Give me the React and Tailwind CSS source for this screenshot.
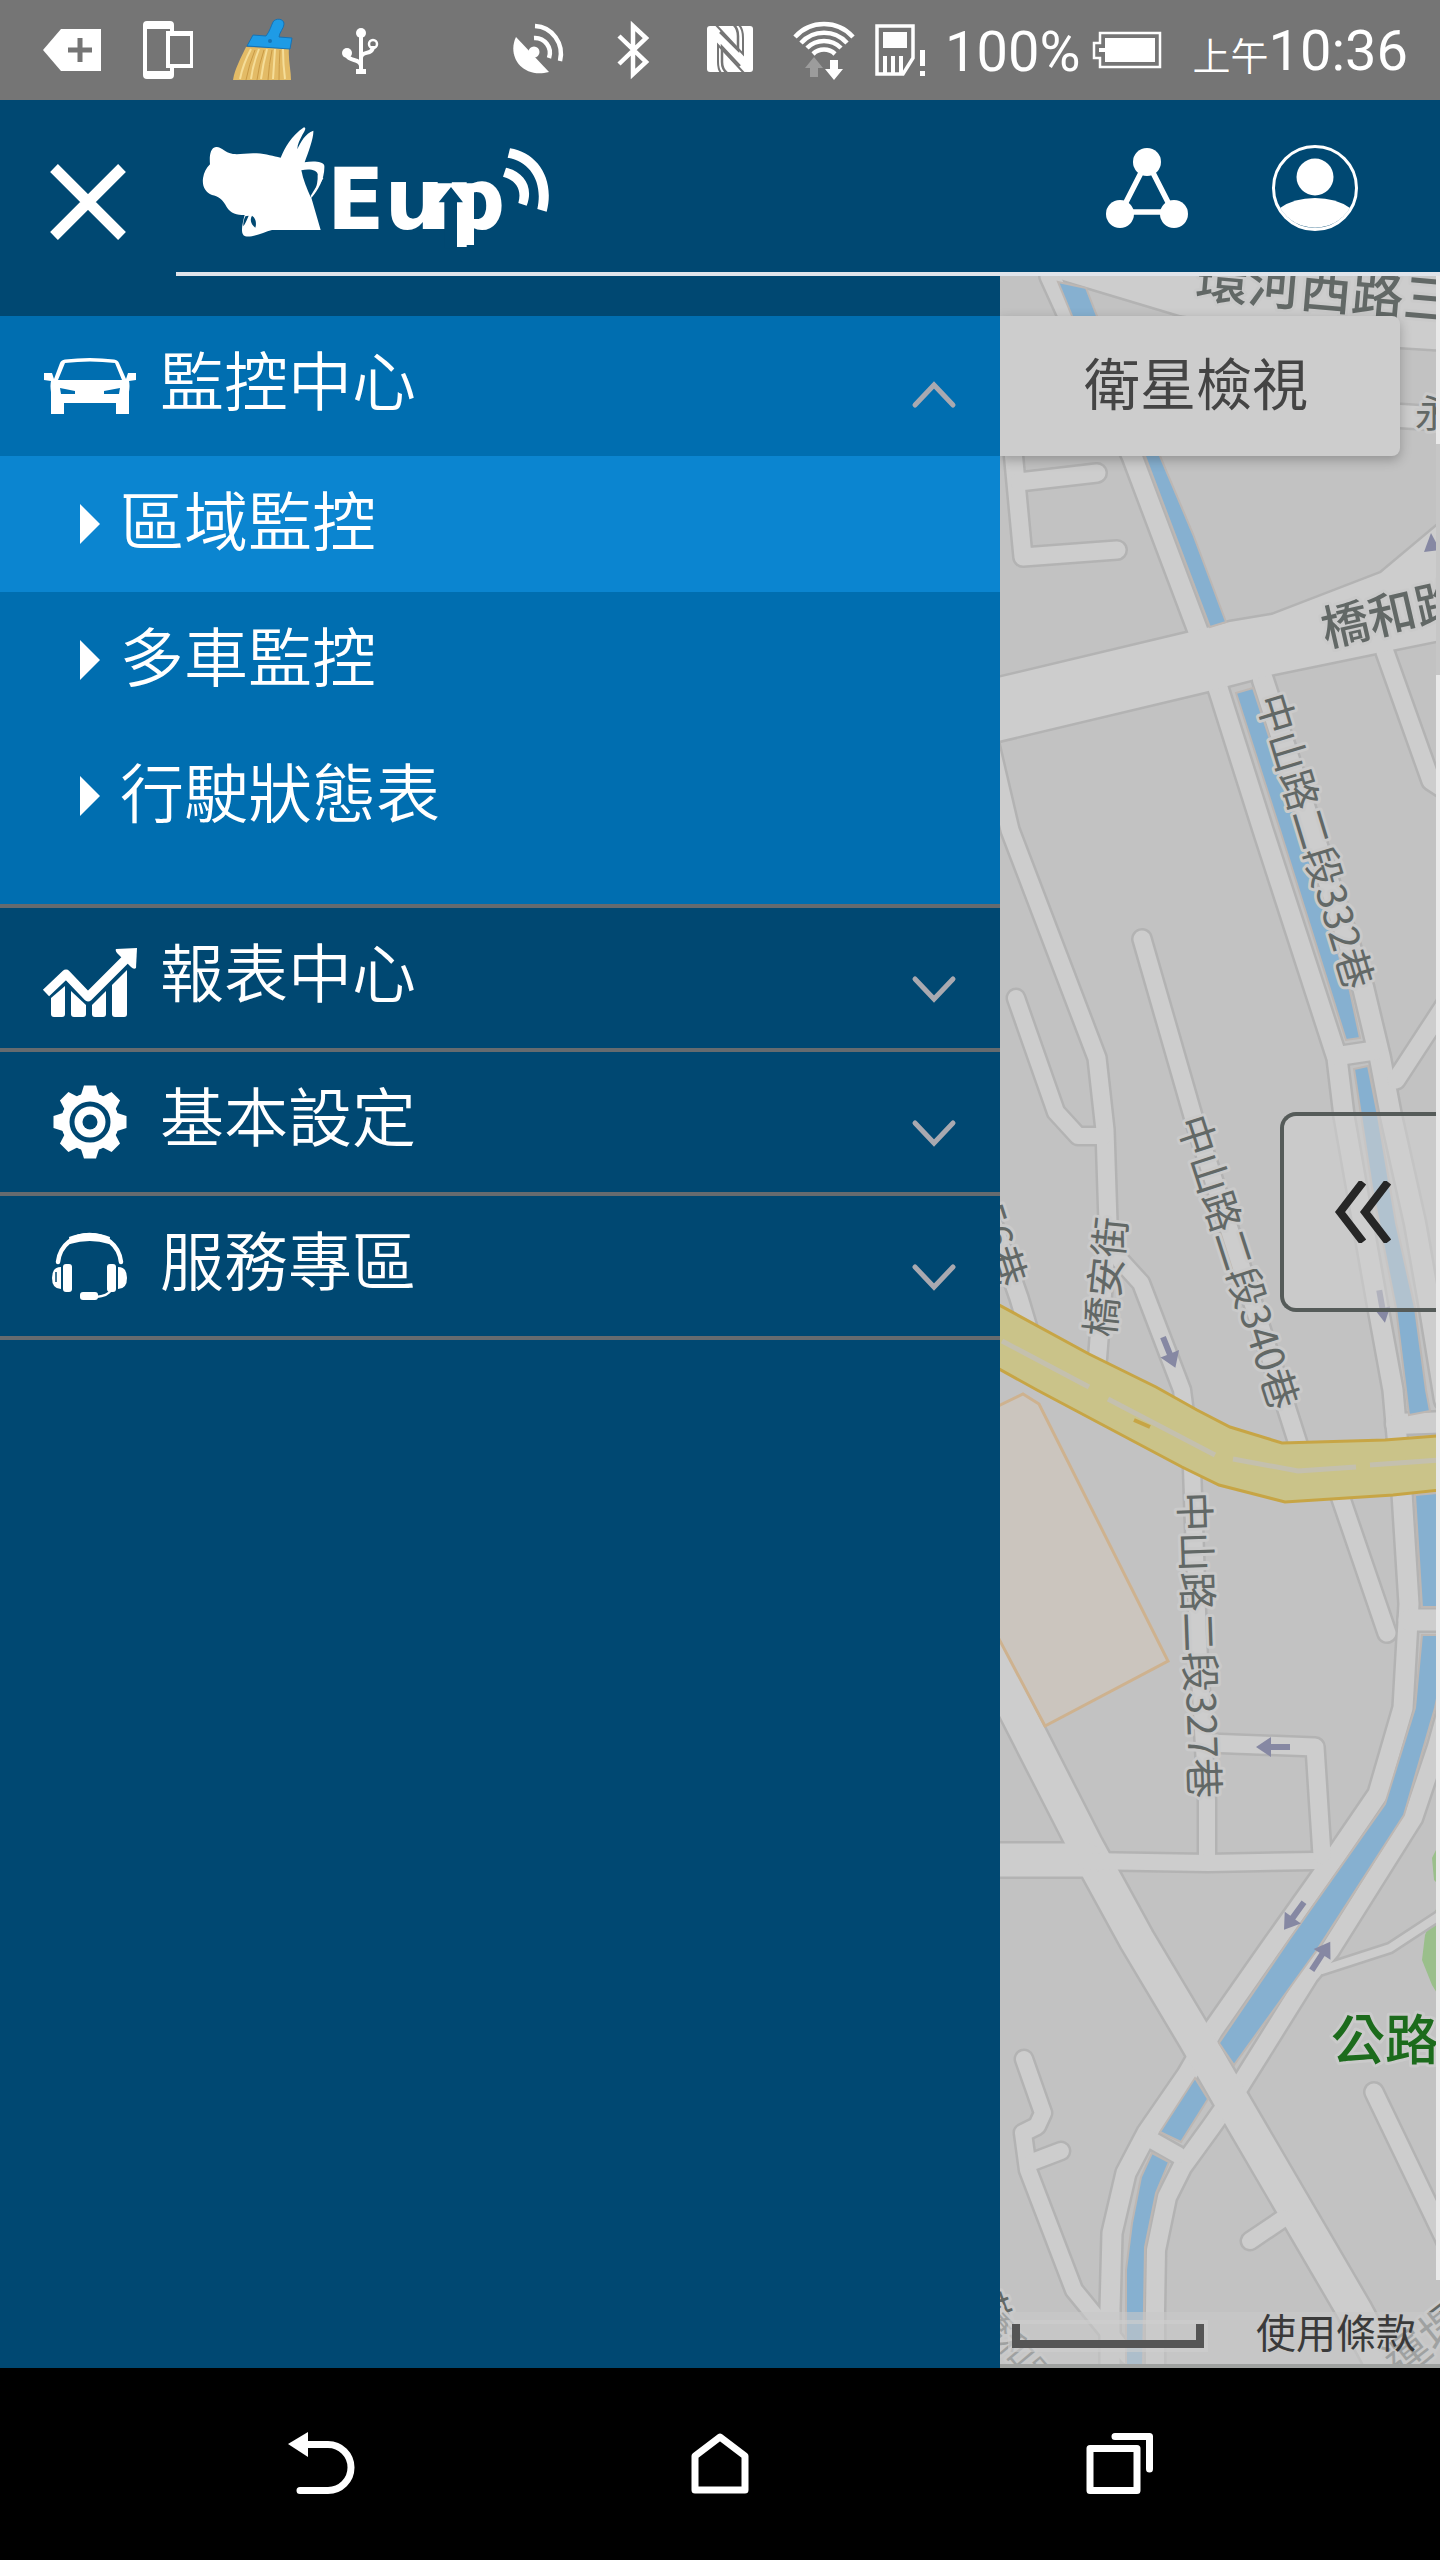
import React, { useState } from 'react';

const FONT = "font-['Noto_Sans_CJK_TC',sans-serif]";

/* ---------- status bar ---------- */

function StatusIcon({ x, w = 95, children }) {
    return (
        <svg viewBox={`${x} 0 ${w} 100`} height="100" width={w} className="shrink-0" aria-hidden="true">
            {children}
        </svg>
    );
}

function StatusBar() {
    return (
        <div className="flex h-[100px] items-center bg-[#757575] pl-7 pr-8 text-white">
            <StatusIcon x={28}>
                <path fill="#fff" d="M43 50 L61 29 H101 V71 H61 Z" />
                <path stroke="#757575" strokeWidth="5" d="M80 38 V62 M68 50 H92" />
            </StatusIcon>
            <StatusIcon x={123}>
                <path
                    fill="#fff"
                    fillRule="evenodd"
                    d="M147 21 H170 Q174 21 174 25 V31 H193 V68 H174 V75 Q174 79 170 79 H147 Q143 79 143 75 V25 Q143 21 147 21 Z M147 29 V71 H170 V68 H166 V31 H170 V29 Z M170 36 V64 H190 V36 Z"
                />
            </StatusIcon>
            <StatusIcon x={218}>
                <path fill="#e3bb66" d="M246 47 L289 48 C288 60 291 70 291 80 H233 C235 68 241 58 246 47 Z" />
                <path
                    stroke="#f5dd98"
                    strokeWidth="2"
                    fill="none"
                    d="M251 49 Q243 64 240 79 M259 49 Q253 64 251 79 M267 49 Q263 64 261 79 M275 49 Q274 64 273 79 M283 49 Q283 64 285 79"
                />
                <path
                    stroke="#c99a45"
                    strokeWidth="1"
                    fill="none"
                    d="M255 50 Q249 64 246 80 M264 50 Q259 64 257 80 M272 50 Q269 64 268 80 M280 50 Q279 64 279 80"
                />
                <path
                    fill="#1e9be6"
                    stroke="#1673b5"
                    strokeWidth="1"
                    d="M253 35 L266 36 C270 31 271 26 273 22 C275 18 284 18 284 24 C284 28 279 33 279 37 L292 38 L290 49 L247 46 Z"
                />
                <circle cx="270" cy="41" r="2" fill="#1673b5" />
            </StatusIcon>
            <StatusIcon x={313}>
                <g fill="none" stroke="#fff" strokeWidth="4">
                    <path d="M361 33 V72 M347 54 C347 62 361 58 361 66 M373 46 C373 56 361 50 361 58" />
                    <circle cx="373" cy="44" r="4" strokeWidth="2.5" />
                </g>
                <circle cx="361" cy="33" r="5" fill="#fff" />
                <circle cx="347" cy="53" r="5" fill="#fff" />
                <rect x="356" y="69" width="10" height="5" fill="#fff" />
            </StatusIcon>

            <div className="ml-auto flex items-center">
                <StatusIcon x={490}>
                    <path fill="#fff" d="M516 37 C507 55 521 79 549 72 Z" />
                    <circle cx="534" cy="52" r="5.5" fill="#fff" />
                    <g fill="none" stroke="#fff" strokeWidth="4.5">
                        <path d="M534 38 A15 15 0 0 1 549 58" />
                        <path d="M535 26 A27 28 0 0 1 560 61" />
                    </g>
                </StatusIcon>
                <StatusIcon x={585}>
                    <path
                        fill="none"
                        stroke="#fff"
                        strokeWidth="4.5"
                        d="M619 36 L646 62 L633 74 V26 L646 38 L619 64"
                    />
                </StatusIcon>
                <StatusIcon x={680}>
                    <rect x="707" y="26" width="46" height="46" rx="3" fill="#fff" />
                    <g fill="none" stroke="#757575" strokeWidth="2.5">
                        <path d="M720 32 L738 50 V36 Q738 29 734 25 M740 66 L722 47 V62 Q722 69 727 73" />
                        <path d="M716 25 L743 54 V38 Q743 29 739 25 M744 73 L718 45 V62 Q718 69 721 73" strokeWidth="2" />
                    </g>
                </StatusIcon>
                <StatusIcon x={775}>
                    <g fill="none" stroke="#fff" strokeWidth="4.5">
                        <path d="M795 37 A39 39 0 0 1 853 37" />
                        <path d="M801 43 A31 31 0 0 1 847 43" />
                        <path d="M807 48 A24 24 0 0 1 841 48" />
                        <path d="M813 54 A16 16 0 0 1 835 54" />
                    </g>
                    <path fill="#9c9c9c" d="M814 57 L823 68 H818 V77 H810 V68 H805 Z" />
                    <path fill="#fff" d="M834 80 L825 69 H830 V60 H838 V69 H843 Z" />
                </StatusIcon>
                <StatusIcon x={870} w={75}>
                    <path fill="none" stroke="#fff" strokeWidth="3.5" d="M877 26 H913 V58 L903 74 H877 Z" />
                    <path fill="#fff" d="M883 32 H907 V48 H883 Z M883 56 H887 V74 H883 Z M891 56 H895 V74 H891 Z M899 56 H903 V74 H899 Z" />
                    <path fill="#fff" d="M920 50 H925 V66 H920 Z M920 71 H925 V76 H920 Z" />
                </StatusIcon>
                <span className="pt-1 font-[Roboto,sans-serif] text-[56px] leading-[64px]">100%</span>
                <StatusIcon x={1080} w={100}>
                    <path
                        fill="none"
                        stroke="#fff"
                        strokeWidth="2.5"
                        d="M1099 33 H1159 V67 H1099 V58 H1093 V43 H1099 Z"
                    />
                    <path fill="#fff" d="M1104 38 H1154 V62 H1104 V52 H1098 V48 H1104 Z" />
                </StatusIcon>
                <span className="ml-3 flex items-baseline pt-1">
                    <span className={`${FONT} text-[38px] leading-[64px] font-[350]`}>上午</span>
                    <span className="font-[Roboto,sans-serif] text-[56px] leading-[64px]">10:36</span>
                </span>
            </div>
        </div>
    );
}

/* ---------- header ---------- */

function Logo() {
    return (
        <svg viewBox="0 0 1140 450" width="380" height="150" role="img" aria-label="Eup">
            <g fill="#fff">
                <path d="M78 96 C92 94 100 108 118 114 C140 122 165 113 200 115 C230 117 250 124 272 128 C284 100 304 62 342 37 C350 39 344 47 338 58 C330 74 322 88 322 103 C332 80 346 56 370 47 C372 66 356 110 344 142 C366 138 400 138 403 152 C405 190 384 228 364 248 L392 345 H246 C220 352 190 368 166 364 C150 360 156 330 164 300 C140 300 122 296 110 276 C98 252 84 244 66 240 C46 232 36 214 39 190 C42 172 48 160 60 148 C58 126 60 98 78 96 Z" />
                <path d="M960 100 C1040 112 1096 190 1070 290 L1042 282 C1060 200 1020 140 953 128 Z" />
                <path d="M948 158 C1002 170 1032 216 1010 272 L985 264 C996 226 980 196 939 185 Z" />
            </g>
            <g fill="#004872">
                <path d="M334 166 C356 160 382 164 383 178 C384 196 380 214 376 226 L362 246 C350 220 340 196 334 166 Z" />
                <path d="M186 302 C198 310 200 326 196 338 C184 330 178 314 186 302 Z" />
                <path d="M166 304 L176 302 C170 316 166 326 160 334 C159 324 162 312 166 304 Z" />
            </g>
            <path d="M398 188 L364 244" stroke="#fff" strokeWidth="5" />
            <text x="410" y="342" fontSize="254" className="font-['DejaVu_Sans',sans-serif] font-bold" fill="#fff">
                Eup
            </text>
            {/* bar that joins the last two letters, with the arrow cut out of it */}
            <path fill="#fff" d="M708 205 H852 V390 H801 V342 H708 Z" />
            <path fill="#004872" d="M783 216 L819 262 H801 V400 H763 V262 H746 Z" />
        </svg>
    );
}

function Header() {
    return (
        <header className="flex h-[176px] bg-[#004872]">
            <button type="button" aria-label="關閉選單" className="flex w-44 shrink-0 items-center pl-[46px]">
                <svg viewBox="0 0 84 84" width="84" height="84" className="mt-7">
                    <path stroke="#fff" strokeWidth="11" d="M8 8 L76 76 M76 8 L8 76" />
                </svg>
            </button>
            <div className="flex flex-1 items-center border-b-4 border-[#e0e4ea] pl-3.5 pr-20">
                <a href="#home" className="mt-2">
                    <Logo />
                </a>
                <div className="ml-auto flex items-center gap-[78px] pt-1">
                    <button type="button" aria-label="分享">
                        <svg viewBox="0 0 90 90" width="90" height="90">
                            <path fill="none" stroke="#fff" strokeWidth="5.5" d="M45 18 L19 69 H71 Z" />
                            <g fill="#fff">
                                <circle cx="45" cy="19" r="14" />
                                <circle cx="18" cy="71" r="14" />
                                <circle cx="72" cy="71" r="14" />
                            </g>
                        </svg>
                    </button>
                    <button type="button" aria-label="帳號">
                        <svg viewBox="0 0 90 90" width="90" height="90">
                            <circle cx="45" cy="45" r="41.5" fill="none" stroke="#fff" strokeWidth="3" />
                            <circle cx="45" cy="34" r="18.5" fill="#fff" />
                            <path fill="#fff" d="M10 65 Q24 55 45 55 Q66 55 80 65 A41 41 0 0 1 10 65 Z" />
                        </svg>
                    </button>
                </div>
            </div>
        </header>
    );
}

/* ---------- side menu ---------- */

function MenuIcon({ viewBox, children }) {
    return (
        <svg viewBox={viewBox} width="100" height="80" fill="#fff" className="shrink-0" aria-hidden="true">
            {children}
        </svg>
    );
}

const carIcon = (
    <MenuIcon viewBox="40 346 100 80">
        <path
            fillRule="evenodd"
            d="M60 363 Q61 360 65 359.500 Q90 356.500 114 359.500 Q118 360 119 363 L126 379 L128 373 H136 V380 L129 381 Q130 385 129 392 V414 H116 V403 H64 V414 H51 V392 Q50 385 51 381 L44 380 V373 H52 L54 379 Z M65 363 L58 380 H122 L115 363 Q90 360 65 363 Z M60 388 L61 394 H75 V391 Z M120 388 L119 394 H104 V391 Z"
        />
    </MenuIcon>
);

const chartIcon = (
    <MenuIcon viewBox="40 938 100 80">
        <path fill="none" stroke="#fff" strokeWidth="9" strokeLinejoin="round" d="M46 993 L66 974 L88 997 L128 957" />
        <path d="M116 949 L137 948 L136 968 Q134 970 131 967 L117 953 Q115 950 116 949 Z" />
        <path d="M51 998 L65 986 V1014 Q65 1017 62 1017 H54 Q51 1017 51 1014 Z" />
        <path d="M71 991 L86 1005 V1014 Q86 1017 83 1017 H74 Q71 1017 71 1014 Z" />
        <path d="M92 1005 L106 991 V1014 Q106 1017 103 1017 H95 Q92 1017 92 1014 Z" />
        <path d="M112 985 L127 970 V1014 Q127 1017 124 1017 H115 Q112 1017 112 1014 Z" />
    </MenuIcon>
);

const gearIcon = (
    <MenuIcon viewBox="40 1082 100 80">
        {[0, 45, 90, 135, 180, 225, 270, 315].map((deg) => (
            <path key={deg} transform={`rotate(${deg} 90 1122)`} d="M84 1085.500 H96 L100 1098 H80 Z" />
        ))}
        <circle cx="90" cy="1122" r="29" />
        <circle cx="90" cy="1122" r="18" fill="none" stroke="#004872" strokeWidth="5" />
        <circle cx="90" cy="1122" r="7.5" fill="#004872" />
    </MenuIcon>
);

const headsetIcon = (
    <MenuIcon viewBox="40 1226 100 80">
        <path fill="none" stroke="#fff" strokeWidth="4.500" strokeLinecap="round" d="M58 1262 C62 1226 117 1226 121 1262" />
        <path d="M69 1237 Q90 1229 110 1237 L109 1244 Q90 1238 70 1244 Z" />
        <rect x="63" y="1264" width="9" height="28" rx="3" />
        <rect x="107" y="1264" width="9" height="28" rx="3" />
        <path d="M61 1267 V1289 Q52 1289 52 1278 Q52 1267 61 1267 Z" />
        <path d="M118 1267 V1289 Q127 1289 127 1278 Q127 1267 118 1267 Z" />
        <path stroke="#004872" strokeWidth="1.500" d="M56 1272 V1282" />
        <path fill="none" stroke="#fff" strokeWidth="2.500" d="M111 1290 Q108 1296 96 1297" />
        <rect x="80" y="1292" width="18" height="8" rx="3" />
    </MenuIcon>
);

const sections = [
    { id: 'monitor', label: '監控中心', icon: carIcon, items: ['區域監控', '多車監控', '行駛狀態表'] },
    { id: 'report', label: '報表中心', icon: chartIcon, items: [] },
    { id: 'setting', label: '基本設定', icon: gearIcon, items: [] },
    { id: 'service', label: '服務專區', icon: headsetIcon, items: [] },
];

function Chevron({ up }) {
    return (
        <svg viewBox="0 0 48 32" width="48" height="32" className="ml-auto mt-5" aria-hidden="true">
            <path
                fill="none"
                stroke="#a9a9b0"
                strokeWidth="5"
                strokeLinecap="round"
                d={up ? 'M5 25 L24 5 L43 25' : 'M5 7 L24 27 L43 7'}
            />
        </svg>
    );
}

function SideMenu() {
    const [open, setOpen] = useState('monitor');
    const [active, setActive] = useState('區域監控');

    return (
        <nav className="flex-[25] bg-[#004872] pt-10 text-[64px] leading-[80px] font-[350] text-white">
            {sections.map((s) => (
                <div key={s.id} className={open === s.id ? 'border-b-4 border-[#666b6f] bg-[#006eb0]' : 'border-b-4 border-[#666b6f]'}>
                    <button
                        type="button"
                        onClick={() => setOpen(open === s.id ? '' : s.id)}
                        aria-expanded={open === s.id}
                        className="flex h-[140px] w-full items-center pl-10 pr-[42px] text-left"
                    >
                        {s.icon}
                        <span className="pb-[18px] pl-5">{s.label}</span>
                        <Chevron up={open === s.id} />
                    </button>
                    {open === s.id && s.items.length > 0 && (
                        <ul className="pb-10">
                            {s.items.map((item) => (
                                <li key={item}>
                                    <button
                                        type="button"
                                        onClick={() => setActive(item)}
                                        className={
                                            active === item
                                                ? 'flex h-[136px] w-full items-center gap-5 bg-[#0b85d0] pl-20 text-left'
                                                : 'flex h-[136px] w-full items-center gap-5 pl-20 text-left'
                                        }
                                    >
                                        <svg viewBox="0 0 20 40" width="20" height="40" aria-hidden="true">
                                            <path fill="#fff" d="M0 0 L20 20 L0 40 Z" />
                                        </svg>
                                        <span className="pb-3.5">{item}</span>
                                    </button>
                                </li>
                            ))}
                        </ul>
                    )}
                </div>
            ))}
        </nav>
    );
}

/* ---------- map ---------- */

// [path, width] of every ordinary street
const roads = [
    ['M1050 276 L1132 456 L1198 631 L1219 691 L1263 830 L1337 1058 L1344 1116 L1378 1308 L1393 1390 L1402 1493 L1409 1604 L1403 1708 L1378 1794 L1337 1854 L1269 1950 L1213 2030 L1187 2075 L1147 2133 L1126 2173 L1112 2233 L1110 2310 V2368', 19],
    ['M1263 680 L1363 987 L1380 1058 L1391 1116 L1415 1223 L1430 1308 L1445 1400', 20],
    ['M1450 1700 L1437 1747 L1413 1818 L1330 1950 L1309 1975 L1239 2087 L1211 2127 L1182 2167 L1167 2197 L1156 2250 L1155 2310 V2368', 18],
    ['M1012 440 L1023 557 L1117 550', 17],
    ['M1019 482 L1097 473', 17],
    ['M1400 416 L1450 419', 22],
    ['M1385 652 L1431 781 L1460 800', 17],
    ['M990 745 L1010 830 L1097 1058 L1105 1130 L1108 1223 L1097 1365', 17],
    ['M1016 998 L1056 1112 L1078 1136 L1104 1136', 16],
    ['M1142 939 L1193 1116 L1300 1450', 17],
    ['M1338 1490 L1387 1633', 17],
    ['M1120 1260 L1141 1283 L1182 1390 L1192 1468 L1198 1640 L1207 1801 V1860', 16],
    ['M990 1215 L1019 1298 L1030 1335', 17],
    ['M960 1600 L1086 1847 L1137 1940 L1195 2037 L1233 2103 L1354 2310 L1385 2368', 34],
    ['M990 1860 H1086', 33],
    ['M1086 1861 L1208 1863 L1315 1861', 16],
    ['M1207 1743 L1315 1747 L1322 1855', 17],
    ['M1024 2059 L1043 2113 L1037 2126 L1023 2133 L1028 2170 L1074 2290 L1128 2356', 16],
    ['M1032 2162 L1061 2151', 16],
    ['M1250 2241 L1284 2218', 16],
    ['M1374 2092 L1450 2250', 17],
    ['M1322 1970 L1390 1948 L1445 1912', 8],
    ['M1445 1005 L1396 1080', 17],
    ['M1338 1056 L1378 1050', 18],
    ['M1396 1424 L1450 1422', 20],
    ['M1409 1620 H1450', 21],
    ['M1148 2138 L1178 2155', 16],
];

const wideRoads = [
    'M990 680 L1187 633 L1230 622 L1272 615 L1381 573 L1450 515 V638 L1376 653 L1274 674 L1208 691 L990 743 Z',
    'M1050 260 H1450 V350 L1400 347 L1180 315 L1060 279 Z',
];

const water = [
    'M1058 282 L1086 288 L1097 316 L1160 456 L1193 534 L1226 622 L1210 627 L1145 456 L1072 316 Z',
    'M1236 693 L1253 688 L1300 830 L1350 991 L1360 1038 L1346 1040 L1280 830 Z',
    'M1354 1069 L1368 1066 L1378 1116 L1396 1223 L1415 1308 L1426 1390 L1430 1411 L1409 1415 L1406 1390 L1396 1308 L1372 1187 Z',
    'M1415 1495 L1450 1492 V1607 H1422 Z',
    'M1422 1635 H1450 L1435 1708 L1404 1815 L1317 1950 L1234 2065 L1219 2043 L1289 1940 L1385 1804 L1415 1708 Z',
    'M1195 2078 L1208 2099 L1181 2142 L1160 2132 Z',
    'M1152 2153 L1169 2162 L1156 2193 L1145 2247 L1143 2368 H1126 V2270 L1132 2223 L1141 2177 Z',
];

// position is the middle of the text
const labels = [
    { text: '環河西路三', x: 1326, y: 290, deg: 5, size: 52, bold: true },
    { text: '橋和路', x: 1392, y: 614, deg: -13, size: 48, bold: true },
    { text: '中山路二段332巷', x: 1315, y: 841, deg: 73, size: 40 },
    { text: '中山路二段340巷', x: 1238, y: 1262, deg: 72, size: 40 },
    { text: '中山路二段327巷', x: 1199, y: 1645, deg: 88, size: 40 },
    { text: '橋安街', x: 1106, y: 1277, deg: -84, size: 40 },
    { text: '56巷', x: 1000, y: 1245, deg: 72, size: 40 },
    { text: '永', x: 1434, y: 413, deg: 0, size: 38 },
    { text: '巷', x: 993, y: 2310, deg: 70, size: 38 },
    { text: '橋和路', x: 1016, y: 2350, deg: 50, size: 34 },
    { text: '運堤', x: 1425, y: 2340, deg: -38, size: 44 },
];

function MapDrawing() {
    return (
        <svg viewBox="1000 276 440 2092" preserveAspectRatio="xMidYMid slice" className="block h-full w-full bg-[#c2c2c2]" aria-label="地圖" role="img">
            <path d="M1440 1842 L1432 1858 L1434 1880 L1440 1886 Z M1440 1900 L1425 1935 L1422 1960 L1432 1985 L1440 1998 Z" fill="#9abf8b" />
            <g fill="none" stroke="#b3b3b3" strokeLinecap="round" strokeLinejoin="round">
                {roads.map(([d, w]) => (
                    <path key={d} d={d} strokeWidth={w + 5} />
                ))}
                {wideRoads.map((d) => (
                    <path key={d} d={d} strokeWidth="5" />
                ))}
            </g>
            <g fill="none" stroke="#cdcdcd" strokeLinecap="round" strokeLinejoin="round">
                {roads.map(([d, w]) => (
                    <path key={d} d={d} strokeWidth={w} />
                ))}
            </g>
            {wideRoads.map((d) => (
                <path key={d} d={d} fill="#cdcdcd" />
            ))}
            {water.map((d) => (
                <path key={d} d={d} fill="#86b0d0" stroke="#bdb7b3" strokeWidth="2" />
            ))}

            {/* school ground */}
            <path d="M990 1410 L1023 1394 L1039 1404 L1168 1661 L1045 1726 L990 1622 Z" fill="#cbc5be" stroke="#ceb28f" strokeWidth="3" />

            {/* main road */}
            <path
                d="M990 1300 L1089 1354 L1156 1387 L1197 1410 L1230 1427 L1282 1443 L1385 1440 L1450 1435 V1489 L1393 1495 L1285 1502 L1219 1485 L1182 1467 L1037 1390 L990 1364 Z"
                fill="#cac389"
                stroke="#c7a545"
                strokeWidth="3"
            />
            <path
                d="M1002 1341 L1089 1387 M1108 1399 L1215 1455 M1233 1459 L1298 1471 L1356 1467 M1370 1465 L1440 1460"
                fill="none"
                stroke="#c4c0ae"
                strokeWidth="5"
            />
            <path d="M1134 1420 L1150 1427" stroke="#c7a545" strokeWidth="4" />

            {/* one-way arrows */}
            <g fill="#8688a3">
                <path transform="translate(1169 1352) rotate(68)" d="M-16 -3 H2 V-10 L17 0 L2 10 V3 H-16 Z" />
                <path transform="translate(1382 1306) rotate(80)" d="M-16 -3 H2 V-8 L17 0 L2 8 V3 H-16 Z" />
                <path transform="translate(1273 1747) rotate(180)" d="M-17 -3 H2 V-10 L17 0 L2 10 V3 H-17 Z" />
                <path transform="translate(1294 1916) rotate(126)" d="M-17 -3 H2 V-10 L17 0 L2 10 V3 H-17 Z" />
                <path transform="translate(1321 1956) rotate(-57)" d="M-17 -3 H2 V-10 L17 0 L2 10 V3 H-17 Z" />
                <path d="M1424 552 L1431 533 L1440 550 Z" />
            </g>

            <g className={FONT} fill="#626866" stroke="#cacaca" strokeWidth="6" strokeLinejoin="round" paintOrder="stroke" textAnchor="middle">
                {labels.map((l) => (
                    <text
                        key={l.text + l.y}
                        transform={`translate(${l.x} ${l.y}) rotate(${l.deg})`}
                        fontSize={l.size}
                        dy="0.36em"
                        className={l.bold ? 'font-medium' : 'font-normal'}
                    >
                        {l.text}
                    </text>
                ))}
                <text x="1331" y="2060" fontSize="54" fill="#1c6b1c" textAnchor="start" className="font-medium">
                    公路
                </text>
            </g>
            <path d="M1436 276 H1440 V2280 H1436 Z" fill="#e9e9e9" />
            <path d="M1436 444 H1440 V675 H1436 Z" fill="#c6c6c6" />
        </svg>
    );
}

function MapPanel() {
    return (
        <main className="relative flex-[11] overflow-hidden bg-[#c2c2c2]">
            <div className="absolute inset-0">
                <MapDrawing />
            </div>

            <button
                type="button"
                className="absolute left-0 top-10 flex h-[140px] w-[400px] items-center justify-center rounded-r-lg bg-[#cdcdcd] pb-2.5 pr-2 text-[56px] leading-[80px] text-[#444] shadow-[0_4px_12px_rgba(0,0,0,0.25)]"
            >
                衛星檢視
            </button>

            <button
                type="button"
                aria-label="展開"
                className="absolute right-1 top-[836px] flex h-[200px] w-[156px] items-center justify-center rounded-l-2xl border-4 border-r-0 border-[#555b59] bg-[#cecece]/60"
            >
                <svg viewBox="0 0 60 62" width="60" height="62" className="ml-2">
                    <path fill="none" stroke="#262626" strokeWidth="8" d="M29 1 L6 31 L29 61 M54 1 L31 31 L54 61" />
                </svg>
            </button>

            <footer className="absolute inset-x-0 bottom-0 flex h-14 items-center justify-between border-b-4 border-[#a0a2a0] bg-[#c8c8c8]/60 pl-3 pr-6">
                <div className="mb-1 h-6 w-48 border-8 border-t-0 border-[#555] outline-4 outline-[#cecece]/60" />
                <a href="#terms" className="pb-3.5 text-[40px] leading-[44px] text-[#3a3a3a]">
                    使用條款
                </a>
            </footer>
        </main>
    );
}

/* ---------- android navigation ---------- */

function NavBar() {
    return (
        <footer className="flex h-48 items-center justify-center bg-black">
            <div className="flex items-center gap-[320px]">
                <button type="button" aria-label="返回">
                    <svg viewBox="280 2424 80 80" width="80" height="80">
                        <path fill="none" stroke="#fff" strokeWidth="7" strokeLinecap="round" d="M300 2490.500 H328 A23 23 0 0 0 328 2444.500 H304" />
                        <path fill="#fff" d="M288 2444 L308 2432 V2457 Z" />
                    </svg>
                </button>
                <button type="button" aria-label="主畫面">
                    <svg viewBox="680 2424 80 80" width="80" height="80">
                        <path fill="none" stroke="#fff" strokeWidth="7" strokeLinejoin="round" d="M695 2490 V2456 L720 2437 L745 2456 V2490 Z" />
                    </svg>
                </button>
                <button type="button" aria-label="最近使用">
                    <svg viewBox="1080 2424 80 80" width="80" height="80">
                        <g fill="none" stroke="#fff" strokeWidth="7" strokeLinejoin="round" strokeLinecap="round">
                            <path d="M1090 2448.500 H1137 V2490.500 H1090 Z" />
                            <path d="M1115 2436.500 H1149.500 V2469" />
                        </g>
                    </svg>
                </button>
            </div>
        </footer>
    );
}

export default function App() {
    return (
        <div className={`${FONT} flex min-h-screen flex-col bg-black`} lang="zh-Hant">
            <StatusBar />
            <Header />
            <div className="flex flex-1">
                <SideMenu />
                <MapPanel />
            </div>
            <NavBar />
        </div>
    );
}
